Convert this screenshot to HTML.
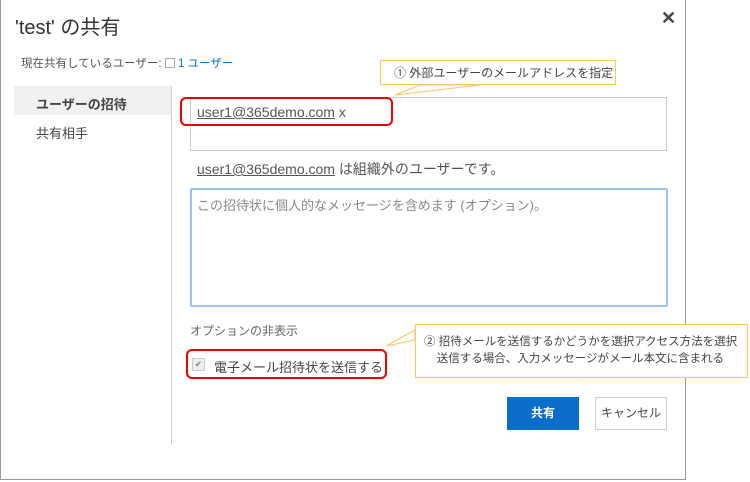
<!DOCTYPE html>
<html><head><meta charset="utf-8"><style>
body{margin:0;width:750px;height:482px;background:#fff;position:relative;overflow:hidden;font-family:"Liberation Sans","Noto Sans CJK JP",sans-serif;color:#444}
.a{position:absolute;white-space:nowrap}
u{text-decoration:underline}
</style></head><body>
<div class="a" style="left:0;top:0;width:684px;height:479px;border:1px solid #999;border-top:none"></div>
<div class="a" style="left:15px;top:11px;font-size:20px;color:#333">'test' の共有</div>
<div class="a" style="left:661px;top:8px;font-size:18px;color:#444;font-weight:bold">✕</div>
<div class="a" style="left:21px;top:55px;font-size:11.5px;color:#555">現在共有しているユーザー: <span style="display:inline-block;width:8px;height:8px;border:1px solid #aaa;vertical-align:-1px"></span> <span style="color:#0a6ec8">1 ユーザー</span></div>
<div class="a" style="left:14px;top:86px;width:157px;height:29px;background:#f1f1f1"></div>
<div class="a" style="left:36px;top:94px;font-size:13px;font-weight:bold;color:#444">ユーザーの招待</div>
<div class="a" style="left:36px;top:123px;font-size:13px;color:#444">共有相手</div>
<div class="a" style="left:171px;top:86px;width:1px;height:358px;background:#ccc"></div>
<div class="a" style="left:190px;top:97px;width:475px;height:52px;border:1px solid #ccc"></div>
<div class="a" style="left:180px;top:97px;width:213px;height:29px;border:2px solid #e00;border-radius:6px;box-sizing:border-box"></div>
<div class="a" style="left:197px;top:104px;font-size:14px;color:#555"><u>user1@365demo.com</u> x</div>
<div class="a" style="left:197px;top:159px;font-size:14px;color:#555"><u>user1@365demo.com</u> は組織外のユーザーです。</div>
<div class="a" style="left:190px;top:188px;width:474px;height:115px;border:2px solid #9cc2f2;border-radius:2px"></div>
<div class="a" style="left:197px;top:195px;font-size:13px;color:#888">この招待状に個人的なメッセージを含めます (オプション)。</div>
<div class="a" style="left:190px;top:322px;font-size:12px;color:#666">オプションの非表示</div>
<div class="a" style="left:186px;top:349px;width:201px;height:30px;border:2px solid #e00;border-radius:6px;box-sizing:border-box"></div>
<div class="a" style="left:192px;top:358px;width:11px;height:11px;border:1px solid #ccc;background:#eee;font-size:9px;color:#888;text-align:center;line-height:11px">✔</div>
<div class="a" style="left:214px;top:357px;font-size:13px;color:#444">電子メール招待状を送信する</div>
<div class="a" style="left:507px;top:397px;width:72px;height:33px;background:#0a6ec8;color:#fff;font-size:12px;font-weight:bold;text-align:center;line-height:33px">共有</div>
<div class="a" style="left:595px;top:397px;width:70px;height:31px;border:1px solid #ccc;background:#fff;color:#444;font-size:12px;text-align:center;line-height:31px">キャンセル</div>
<svg class="a" style="left:0;top:0" width="750" height="482">
<polygon points="395,95 420,85 480,85" fill="#fff" stroke="#f9c76a"/>
<polygon points="386,346 415,340 415,330" fill="#fff" stroke="#f9c76a"/>
</svg>
<div class="a" style="left:380px;top:60px;width:236px;height:25px;border:1px solid #f9c76a;background:#fff;font-size:12px;color:#444;line-height:24px;box-sizing:border-box;padding-left:13px">① 外部ユーザーのメールアドレスを指定</div>
<div class="a" style="left:415px;top:324px;width:333px;height:54px;border:1px solid #f9c76a;background:#fff;font-size:11.5px;color:#444;line-height:17px;box-sizing:border-box;padding:9px 0 0 8px">② 招待メールを送信するかどうかを選択アクセス方法を選択<br>&nbsp;&nbsp;&nbsp;&nbsp;送信する場合、入力メッセージがメール本文に含まれる</div>
</body></html>
